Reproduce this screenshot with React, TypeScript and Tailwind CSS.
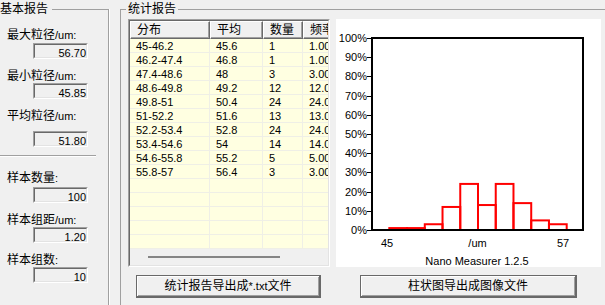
import React from "react";

const rows: [string, string, string, string][] = [
  ["45-46.2", "45.6", "1", "1.00%"],
  ["46.2-47.4", "46.8", "1", "1.00%"],
  ["47.4-48.6", "48", "3", "3.00%"],
  ["48.6-49.8", "49.2", "12", "12.00%"],
  ["49.8-51", "50.4", "24", "24.00%"],
  ["51-52.2", "51.6", "13", "13.00%"],
  ["52.2-53.4", "52.8", "24", "24.00%"],
  ["53.4-54.6", "54", "14", "14.00%"],
  ["54.6-55.8", "55.2", "5", "5.00%"],
  ["55.8-57", "56.4", "3", "3.00%"],
];

const pct = [1, 1, 3, 12, 24, 13, 24, 14, 5, 3];

function Label({ cjk, latin, className }: { cjk: string; latin: string; className: string }) {
  return (
    <div className={"pl-[7px] h-[14px] leading-[14px] whitespace-nowrap " + className}>
      <span className="text-[12px]">{cjk}</span>
      <span className="text-[11px]">{latin}</span>
    </div>
  );
}

function Edit({ value, className }: { value: string; className: string }) {
  return (
    <div
      className={
        "ml-[33px] w-[55px] h-[16px] border border-t-[#a0a0a0] border-l-[#a0a0a0] border-r-white border-b-white " +
        className
      }
    >
      <div className="h-full border border-t-[#696969] border-l-[#696969] border-r-[#e3e3e3] border-b-[#e3e3e3] bg-[#f0f0f0] text-right text-[11px] leading-[12px] pt-[2px] pr-[0px]">
        {value}
      </div>
    </div>
  );
}

function HeaderCell({ text, w }: { text: string; w: string }) {
  return (
    <div
      className={
        "h-full shrink-0 bg-[#f0f0f0] border border-t-white border-l-white border-r-[#696969] border-b-[#696969] shadow-[inset_-1px_-1px_0_#a0a0a0] flex items-center pl-[6px] text-[12px] whitespace-nowrap overflow-hidden " +
        w
      }
    >
      {text}
    </div>
  );
}

function Table() {
  const empty = Array.from({ length: 5 });
  const widths = ["w-[80px]", "w-[53px]", "w-[40px]", "w-[60px]"];
  return (
    <div className="w-[202px] h-[248px] shrink-0 border border-t-[#a0a0a0] border-l-[#a0a0a0] border-r-white border-b-white">
      <div className="h-full border border-t-[#696969] border-l-[#696969] border-r-[#e3e3e3] border-b-[#e3e3e3] flex flex-col overflow-hidden">
        <div className="flex h-[18px] shrink-0">
          <HeaderCell text="分布" w="w-[80px]" />
          <HeaderCell text="平均" w="w-[53px]" />
          <HeaderCell text="数量" w="w-[40px]" />
          <HeaderCell text="频率" w="w-[60px]" />
        </div>
        <div className="h-[210px] shrink-0 bg-[#ffffe1] flex flex-col">
          {rows.map((r, i) => (
            <div key={i} className="flex h-[14px] shrink-0 border-b border-[#efefe6]">
              {r.map((c, j) => (
                <div
                  key={j}
                  className={
                    "shrink-0 h-full border-r border-[#efefe6] pl-[6px] pt-[1px] text-[11px] leading-[12px] whitespace-nowrap overflow-hidden " +
                    widths[j]
                  }
                >
                  {c}
                </div>
              ))}
            </div>
          ))}
          {empty.map((_, i) => (
            <div key={i} className="flex h-[14px] shrink-0 border-b border-[#efefe6]">
              {widths.map((w, j) => (
                <div key={j} className={"shrink-0 h-full border-r border-[#efefe6] " + w} />
              ))}
            </div>
          ))}
        </div>
        <div className="h-[16px] shrink-0 bg-[#f0f0f0] pt-[7px]">
          <div className="ml-[18px] w-[132px] h-[2px] bg-[#858585]" />
        </div>
      </div>
    </div>
  );
}

function Chart() {
  const x0 = 53.3;
  const bw = 17.74;
  const yb = 211;
  const unit = 1.92;
  return (
    <div className="w-[265px] h-[248px] shrink-0 bg-white">
      <svg width="265" height="248" viewBox="0 0 265 248">
        {Array.from({ length: 11 }).map((_, k) => {
          const y = Math.round(19 + k * 19.2);
          return (
            <g key={k}>
              <line x1={31} y1={y + 0.5} x2={36} y2={y + 0.5} stroke="black" strokeWidth={1} />
              <text x={31} y={y + 4} textAnchor="end" fontSize={11} fill="black">
                {100 - k * 10}%
              </text>
            </g>
          );
        })}
        {pct.map((p, i) => (
          <rect
            key={i}
            x={x0 + i * bw}
            y={yb - p * unit}
            width={bw}
            height={p * unit}
            fill="none"
            stroke="#ff0000"
            strokeWidth={2}
          />
        ))}
        <rect x={36} y={19} width={211} height={192} fill="none" stroke="black" strokeWidth={2} />
        <text x={51} y={228} textAnchor="middle" fontSize={11} fill="black">45</text>
        <text x={141.5} y={228} textAnchor="middle" fontSize={11} fill="black">/um</text>
        <text x={227} y={228} textAnchor="middle" fontSize={11} fill="black">57</text>
        <text x={141} y={246} textAnchor="middle" fontSize={11} fill="black">Nano Measurer 1.2.5</text>
      </svg>
    </div>
  );
}

function Button({ w, children, className }: { w: string; children: React.ReactNode; className: string }) {
  return (
    <div
      className={
        "h-[23px] shrink-0 border border-[#696969] border-r-2 border-b-2 " + w + " " + className
      }
    >
      <div className="h-full bg-[#f0f0f0] shadow-[inset_1px_1px_0_#fff,inset_-1px_-1px_0_#a0a0a0] flex items-center justify-center whitespace-nowrap text-[12px]">
        {children}
      </div>
    </div>
  );
}

export default function App() {
  return (
    <div className="w-[605px] h-[305px] bg-[#f0f0f0] flex overflow-hidden text-black font-[family-name:Liberation_Sans,Noto_Sans_CJK_SC,sans-serif]">
      <fieldset className="w-[109px] h-[330px] shrink-0 min-w-0 border-t border-r border-[#a0a0a0] shadow-[1px_0_0_#fff]">
        <legend className="pr-[4px] text-[12px] leading-[18px]">基本报告</legend>
        <Label cjk="最大粒径" latin="/um:" className="mt-[9px]" />
        <Edit value="56.70" className="mt-[2px]" />
        <Label cjk="最小粒径" latin="/um:" className="mt-[9px]" />
        <Edit value="45.85" className="mt-[1px]" />
        <Label cjk="平均粒径" latin="/um:" className="mt-[9px]" />
        <Edit value="51.80" className="mt-[9px]" />
        <div className="mt-[8px] w-[96px] h-[2px] border-t border-t-[#a0a0a0] border-b border-b-white" />
        <Label cjk="样本数量" latin=":" className="mt-[13px]" />
        <Edit value="100" className="mt-[3px]" />
        <Label cjk="样本组距" latin="/um:" className="mt-[9px]" />
        <Edit value="1.20" className="mt-[1px]" />
        <Label cjk="样本组数" latin=":" className="mt-[9px]" />
        <Edit value="10" className="mt-[1px]" />
      </fieldset>
      <fieldset className="ml-[11px] flex-1 h-[330px] min-w-0 border-t border-l border-[#a0a0a0] pl-[5px]">
        <legend className="px-[2px] text-[12px] leading-[18px]">统计报告</legend>
        <div className="ml-[2px] mt-[1px] flex gap-[6px]">
          <Table />
          <Chart />
        </div>
        <div className="ml-[10px] mt-[8px] flex">
          <Button w="w-[185px]" className="">
            <span>统计报告导出成</span>
            <span className="text-[11px]">*.txt</span>
            <span>文件</span>
          </Button>
          <Button w="w-[217px]" className="ml-[39px]">
            柱状图导出成图像文件
          </Button>
        </div>
      </fieldset>
    </div>
  );
}
